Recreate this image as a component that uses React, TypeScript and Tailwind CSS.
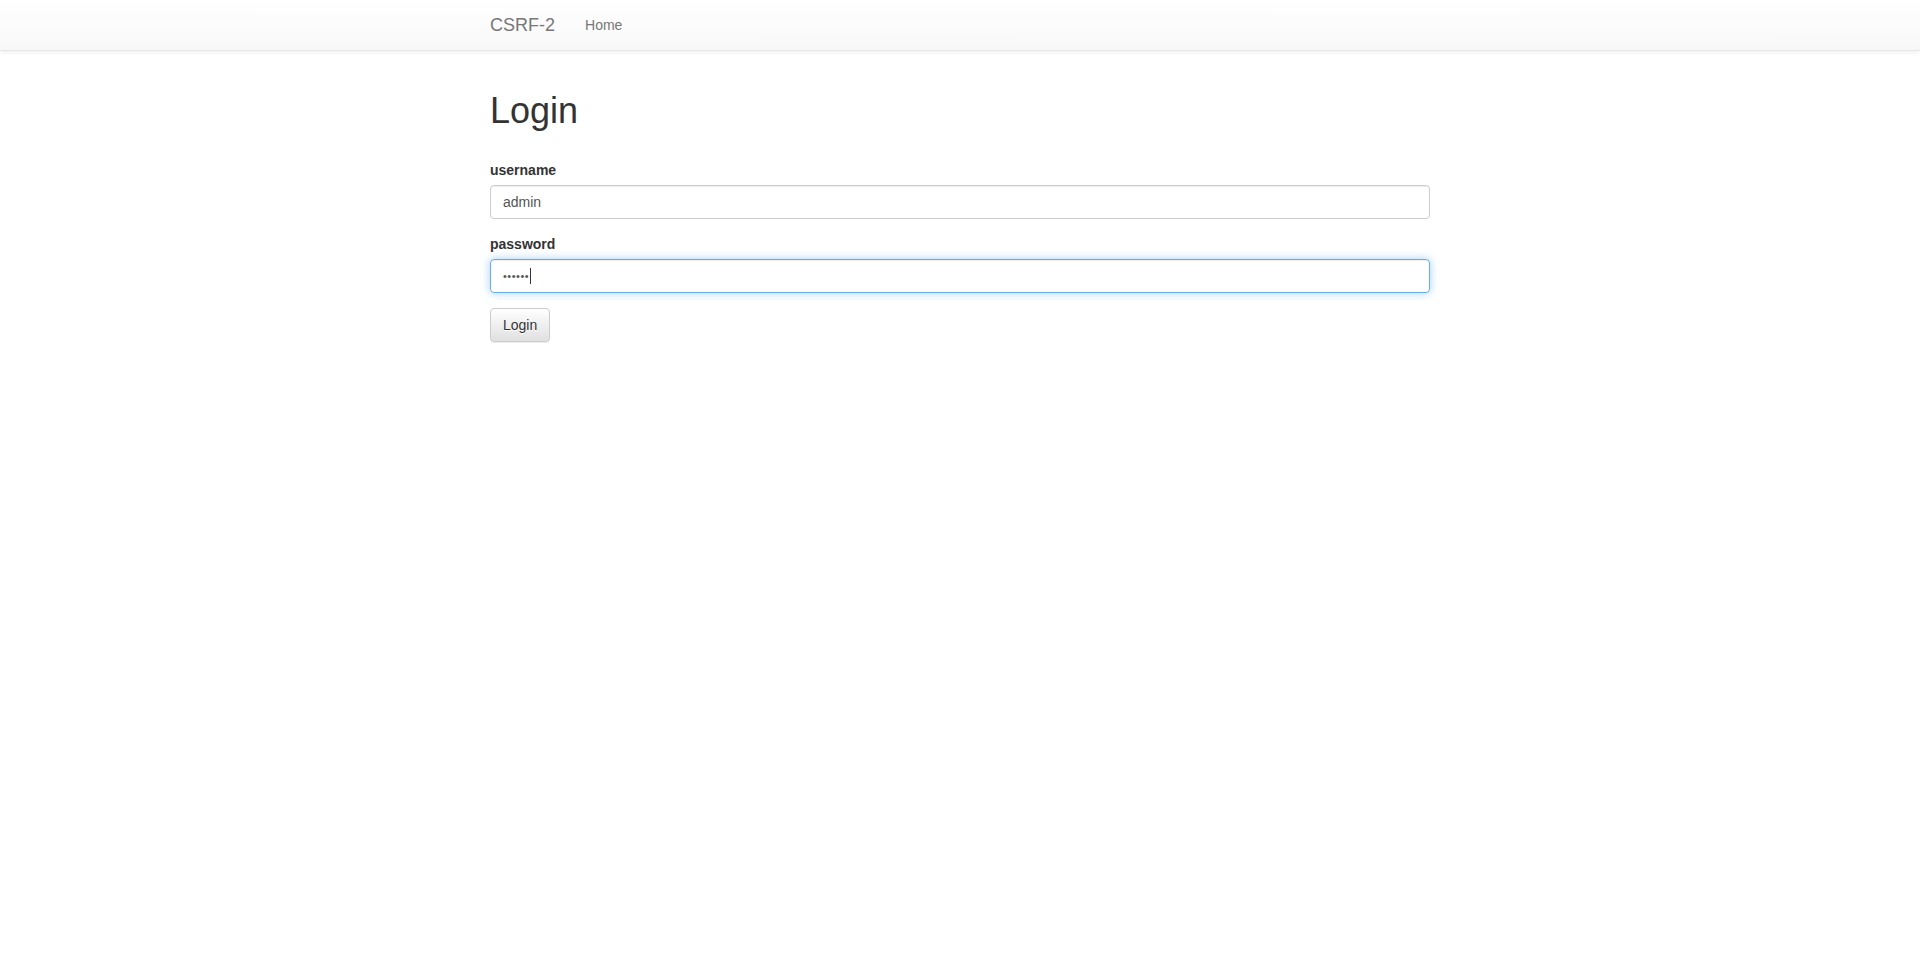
import React from "react";

export default function App() {
  return (
    <div
      className="min-h-screen bg-white text-[14px] leading-[20px] text-[#333]"
      style={{ fontFamily: '"Liberation Sans", Arial, sans-serif' }}
    >
      {/* Navbar */}
      <nav className="h-[51px] border-b border-[#e7e7e7] bg-gradient-to-b from-white to-[#f8f8f8] shadow-[0_1px_5px_rgba(0,0,0,0.075)]">
        <div className="mx-auto flex w-[970px] px-0">
          <a className="h-[50px] px-[15px] py-[15px] text-[18px] leading-[20px] text-[#777]">
            CSRF-2
          </a>
          <a className="px-[15px] py-[15px] leading-[20px] text-[#777]">Home</a>
        </div>
      </nav>

      <div className="mx-auto w-[970px] px-[15px]">
        <h1 className="mt-[40px] mb-[29px] text-[36px] font-normal leading-[39.6px] text-[#333]">
          Login
        </h1>

        <form onSubmit={(e) => e.preventDefault()}>
          <div className="mb-[15px]">
            <label className="mb-[5px] block font-bold">username</label>
            <input
              readOnly
              value="admin"
              className="block h-[34px] w-full rounded-[4px] border border-[#ccc] px-[12px] py-[6px] text-[14px] text-[#555] shadow-[inset_0_1px_1px_rgba(0,0,0,0.075)] outline-none"
            />
          </div>

          <div className="mb-[15px]">
            <label className="mb-[5px] block font-bold">password</label>
            <div className="flex h-[34px] w-full items-center rounded-[4px] border border-[#66afe9] px-[12px] text-[#555] shadow-[inset_0_1px_1px_rgba(0,0,0,0.075),0_0_8px_rgba(102,175,233,0.6)]">
              <span className="text-[11px] tracking-[0.5px]">••••••</span>
              <span className="ml-[1px] h-[16px] w-[1px] bg-[#333]" />
            </div>
          </div>

          <button
            type="submit"
            className="h-[34px] rounded-[4px] border border-[#ccc] bg-gradient-to-b from-white to-[#e0e0e0] px-[12px] py-[6px] text-[14px] leading-[20px] text-[#333] [text-shadow:0_1px_0_#fff] shadow-[inset_0_1px_0_rgba(255,255,255,0.15),0_1px_1px_rgba(0,0,0,0.075)]"
          >
            Login
          </button>
        </form>
      </div>
    </div>
  );
}
